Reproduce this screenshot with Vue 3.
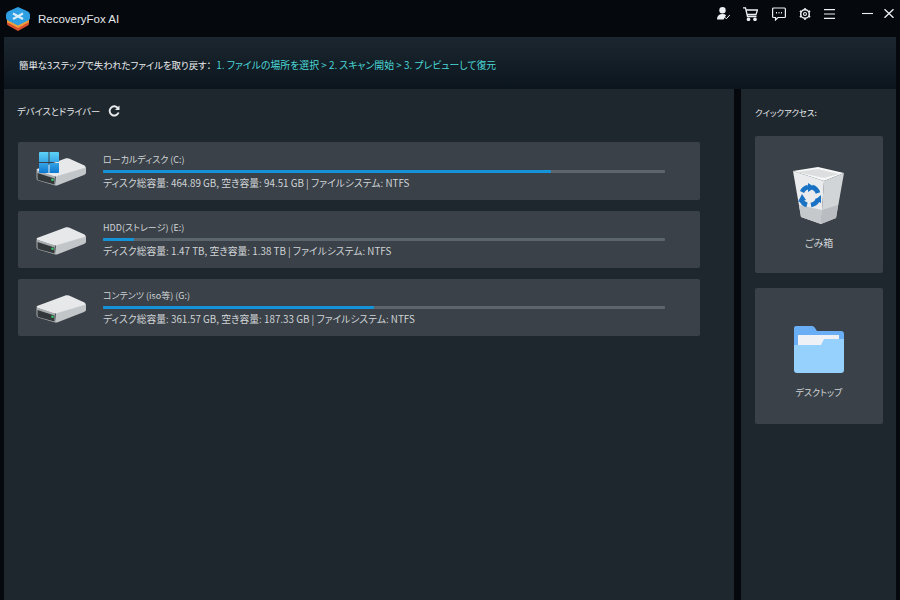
<script setup>
const drives = [
  { name: 'ローカルディスク (C:)', pct: 79.7, win: true, info: 'ディスク総容量: 464.89 GB, 空き容量: 94.51 GB | ファイルシステム: NTFS' },
  { name: 'HDD(ストレージ) (E:)', pct: 5.6, info: 'ディスク総容量: 1.47 TB, 空き容量: 1.38 TB | ファイルシステム: NTFS' },
  { name: 'コンテンツ (iso等) (G:)', pct: 48.2, info: 'ディスク総容量: 361.57 GB, 空き容量: 187.33 GB | ファイルシステム: NTFS' }
]
</script>

<template>
  <div class="app">
    <header class="topbar">
      <svg class="logo" viewBox="0 0 24 24" width="24" height="24">
        <path d="M12 8 23 14 23 17Q23 18 21 19L12 24 3 19Q1 18 1 17V14Z" fill="#d9522f"/>
        <path d="M12 6 23 12 23 15 12 21 1 15 1 12Z" fill="#eda13c"/>
        <path d="M12 0 22 4.500Q24 5.500 24 8V11Q24 12.500 22 13.500L12 18.500 2 13.500Q0 12.500 0 11V8Q0 5.500 2 4.500Z" fill="#2f9fe4"/>
        <path d="M7 6.500 17 12M17 6.500 7 12" stroke="#d8eefb" stroke-width="2" fill="none"/>
      </svg>
      <span class="brand">RecoveryFox AI</span>
      <div class="tools">
        <svg class="t user" viewBox="0 0 13 13" width="13" height="13"><circle cx="5.500" cy="3.300" r="3.200" fill="#eef1f3"/><path d="M0 12.500Q0 7 5.500 7 8 7 9 8.300L6.500 12.500Z" fill="#eef1f3"/><path d="M7.500 10 9.300 11.800 13 7.800" stroke="#eef1f3" fill="none"/></svg>
        <svg class="t cart" viewBox="0 0 15 14" width="15" height="14" fill="none" stroke="#eef1f3" stroke-width="1.300"><path d="M0 .8H2.500L4.500 9.500H13.500M3 3H14.500L13 7.500H4"/><circle cx="5.500" cy="12.300" r="1.200" fill="#eef1f3"/><circle cx="12" cy="12.300" r="1.200" fill="#eef1f3"/></svg>
        <svg class="t chat" viewBox="0 0 14 14" width="14" height="14" fill="none" stroke="#eef1f3" stroke-width="1.200"><path d="M1.500 1H12.500Q13.400 1 13.400 2V9.500Q13.400 10.500 12.500 10.500H6L3.500 13V10.500H1.500Q.6 10.500 .6 9.500V2Q.6 1 1.500 1Z"/><path d="M4 5.800H5M6.500 5.800H7.500M9 5.800H10" stroke-width="1.500"/></svg>
        <svg class="t gear" viewBox="0 0 14 14" width="12" height="12" fill="none" stroke="#eef1f3"><circle cx="7" cy="7" r="5" stroke-width="1.800"/><circle cx="7" cy="7" r="1.700" stroke-width="1.300"/><path d="M7 0V2M7 12V14M1 3.500 2.700 4.500M11.300 9.500 13 10.500M1 10.500 2.700 9.500M11.300 4.500 13 3.500" stroke-width="1.800"/></svg>
        <svg class="t menu" viewBox="0 0 11 10" width="11" height="10" stroke="#eef1f3" stroke-width="1.100"><path d="M0 .6H11M0 5H11M0 9.400H11"/></svg>
        <svg class="t min" viewBox="0 0 11 11" width="11" height="11" stroke="#eef1f3" stroke-width="1.100"><path d="M0 5.500H11"/></svg>
        <svg class="t close" viewBox="0 0 10 9" width="10" height="9" stroke="#eef1f3" stroke-width="1.300"><path d="M.5 .2 9.500 8.800M9.500 .2 .5 8.800"/></svg>
      </div>
    </header>

    <div class="window">
      <div class="banner">
        <span class="lead">簡単な3ステップで失われたファイルを取り戻す：</span>
        <span class="steps">1. ファイルの場所を選択 &gt; 2. スキャン開始 &gt; 3. プレビューして復元</span>
      </div>

      <div class="body">
        <main class="left">
          <div class="heading">
            <span>デバイスとドライバー</span>
            <svg viewBox="0 0 12 12" width="12" height="12" fill="none"><path d="M10 3.200A4.600 4.600 0 1 0 10.600 7.500" stroke="#e8ebee" stroke-width="1.900"/><path d="M11.500 .5V5H7Z" fill="#e8ebee"/></svg>
          </div>
          <div class="list">
            <div v-for="d in drives" :key="d.name" class="drive">
              <div class="icon">
                <svg viewBox="0 0 50 28" width="50" height="28">
                  <path d="M20 18 50 9V15Q50 16 48 17L21 27.500H19Z" fill="#c3c6c9"/>
                  <path d="M1 11 30 .3Q31.500 0 33 .5L48.500 7.500Q50.500 9 48.500 10L20 18.500Q19 18.800 17 18.300L1.500 13Q0 12 1 11Z" fill="#e6e8ea"/>
                  <path d="M.5 12.500 19 18.500V27.500L2 22.500Q.5 22 .5 20Z" fill="#a9adb0"/>
                  <path d="M1.500 15 18.500 20.500V26.500L2 22Q1.500 21.500 1.500 20Z" fill="#33383a"/>
                  <circle cx="16.500" cy="21.800" r="1.300" fill="#36c96e"/>
                </svg>
                <svg v-if="d.win" class="win" viewBox="0 0 20 21" width="20" height="21">
                  <defs>
                    <linearGradient id="wg" x1="0" y1="0" x2="0" y2="1">
                      <stop offset="0" stop-color="#5fd2f8"/>
                      <stop offset="1" stop-color="#0e78d2"/>
                    </linearGradient>
                  </defs>
                  <path d="M0 1Q0 0 1 0H9.500V10H0ZM10.500 0H19Q20 0 20 1V10H10.500ZM0 11H9.500V21H1Q0 21 0 20ZM10.500 11H20V20Q20 21 19 21H10.500Z" fill="url(#wg)"/>
                </svg>
              </div>
              <div class="meta">
                <div class="name">{{ d.name }}</div>
                <div class="bar"><div class="fill" :style="{ width: d.pct + '%' }"></div></div>
                <div class="info">{{ d.info }}</div>
              </div>
            </div>
          </div>
        </main>

        <aside class="right">
          <div class="qhead">クイックアクセス:</div>
          <div class="qcard trash">
            <svg viewBox="0 0 52 57" width="52" height="57">
              <path d="M0 4 25 0 51 6 31 14Z" fill="#f7f8f8"/>
              <path d="M3 5 25 2 46 7 31 11Z" fill="#dcdee0"/>
              <path d="M0 4 31 14 28 57 8 50Z" fill="#e9ebed"/>
              <path d="M31 14 51 6 43 51 28 57Z" fill="#d2d5d8"/>
              <path d="M6 38 29 43 28 57 8 50Z" fill="#c6c9cc"/>
              <path d="M29 43 45 38 43 51 28 57Z" fill="#b9bcc0"/>
              <g fill="none" stroke="#1a72c4" stroke-width="4.500">
                <path d="M9 25A9 9 0 0 1 15 20"/>
                <path d="M19 20A9 9 0 0 1 25 26"/>
                <path d="M25 32A9 9 0 0 1 18 38"/>
                <path d="M14 38A9 9 0 0 1 8 32"/>
              </g>
              <path d="M15 16 22 20.500 15 25ZM28 28 28 36 22 33ZM5 35 9 27 13 33Z" fill="#1a72c4"/>
            </svg>
            <span>ごみ箱</span>
          </div>
          <div class="qcard desk">
            <svg viewBox="0 0 50 47" width="50" height="47">
              <path d="M2 0H18Q20 0 21 2L23 5H47Q50 5 50 8V22H0V2Q0 0 2 0Z" fill="#6aaef5"/>
              <path d="M4 9H45V22H4Z" fill="#eef2f6"/>
              <path d="M0 19H27L30 13H50V44Q50 47 47 47H3Q0 47 0 44Z" fill="#96d0fd"/>
            </svg>
            <span>デスクトップ</span>
          </div>
        </aside>
      </div>
    </div>
  </div>
</template>

<style>
html, body { margin: 0; background: #05080d; }
</style>

<style scoped>
.app {
  width: 900px;
  height: 600px;
  overflow: hidden;
  display: flex;
  flex-direction: column;
  background: #05080d;
  font-family: "Noto Sans CJK JP", "Liberation Sans", sans-serif;
  font-size: 10px;
  font-weight: 400;
  font-feature-settings: "palt";
  color: #cfd3d6;
}
.topbar {
  height: 37px;
  flex: none;
  display: flex;
  align-items: center;
  padding: 0 6px;
  box-sizing: border-box;
}
.brand {
  margin-left: 8px;
  font: 11.500px "Liberation Sans", sans-serif;
  color: #e6e9eb;
}
.tools { margin-left: auto; height: 27px; align-self: flex-start; display: flex; align-items: center; }
.user { margin-right: 13px; }
.cart { margin-right: 14px; }
.chat { margin-right: 13px; }
.gear { margin-right: 13px; }
.menu { margin-right: 27px; }
.min { margin-right: 11px; }
.window {
  flex: 1;
  margin: 0 4px;
  display: flex;
  flex-direction: column;
  min-height: 0;
}
.banner {
  height: 52px;
  flex: none;
  display: flex;
  align-items: center;
  gap: 5px;
  padding: 3px 0 0 15px;
  box-sizing: border-box;
  color: #eceef0;
  background: linear-gradient(#1b2730, #0c151d);
}
.lead { font-size: 9.400px; }
.steps { color: #4bd6d6; font-size: 9.900px; }
.body { flex: 1; display: flex; gap: 7px; min-height: 0; }
.left { width: 730px; background: #1f272e; padding: 0 14px; box-sizing: border-box; }
.heading {
  height: 44px;
  margin: 0 0 9px -1px;
  display: flex;
  align-items: center;
  gap: 8px;
  color: #e6e8ea;
  font-size: 9.300px;
}
.list { width: 682px; display: flex; flex-direction: column; gap: 11px; }
.drive {
  height: 57px;
  display: flex;
  align-items: center;
  background: #3a4148;
  border-radius: 2px;
}
.drive:first-child { height: 58px; }
.icon { position: relative; width: 50px; height: 28px; margin-left: 18px; margin-top: 2px; }
.win { position: absolute; left: 3px; top: -6px; }
.meta { margin-left: 17px; width: 562px; padding-top: 10px; align-self: flex-start; }
.drive:first-child .meta { padding-top: 11px; }
.name { height: 14px; line-height: 14px; color: #d0d4d7; font-size: 9px; }
.bar { height: 3px; margin-top: 3px; background: #5c656c; border-radius: 1px; }
.fill { height: 3px; background: #1593d8; border-radius: 1px; }
.info { height: 14px; line-height: 14px; margin-top: 3px; color: #d0d4d7; font-size: 9.800px; }
.right { flex: 1; background: #1f272e; padding: 0 13px 0 14px; }
.qhead { height: 47px; padding-bottom: 2px; box-sizing: border-box; display: flex; align-items: center; color: #e6e8ea; font-size: 8.400px; }
.qcard {
  display: flex;
  flex-direction: column;
  align-items: center;
  background: #3a4148;
  border-radius: 2px;
  color: #d0d4d7;
}
.trash { height: 137px; padding-top: 31px; box-sizing: border-box; margin-bottom: 15px; }
.trash span { margin-top: 11px; }
.desk { height: 136px; padding-top: 38px; box-sizing: border-box; }
.desk span { margin-top: 13px; font-size: 9px; }
</style>
